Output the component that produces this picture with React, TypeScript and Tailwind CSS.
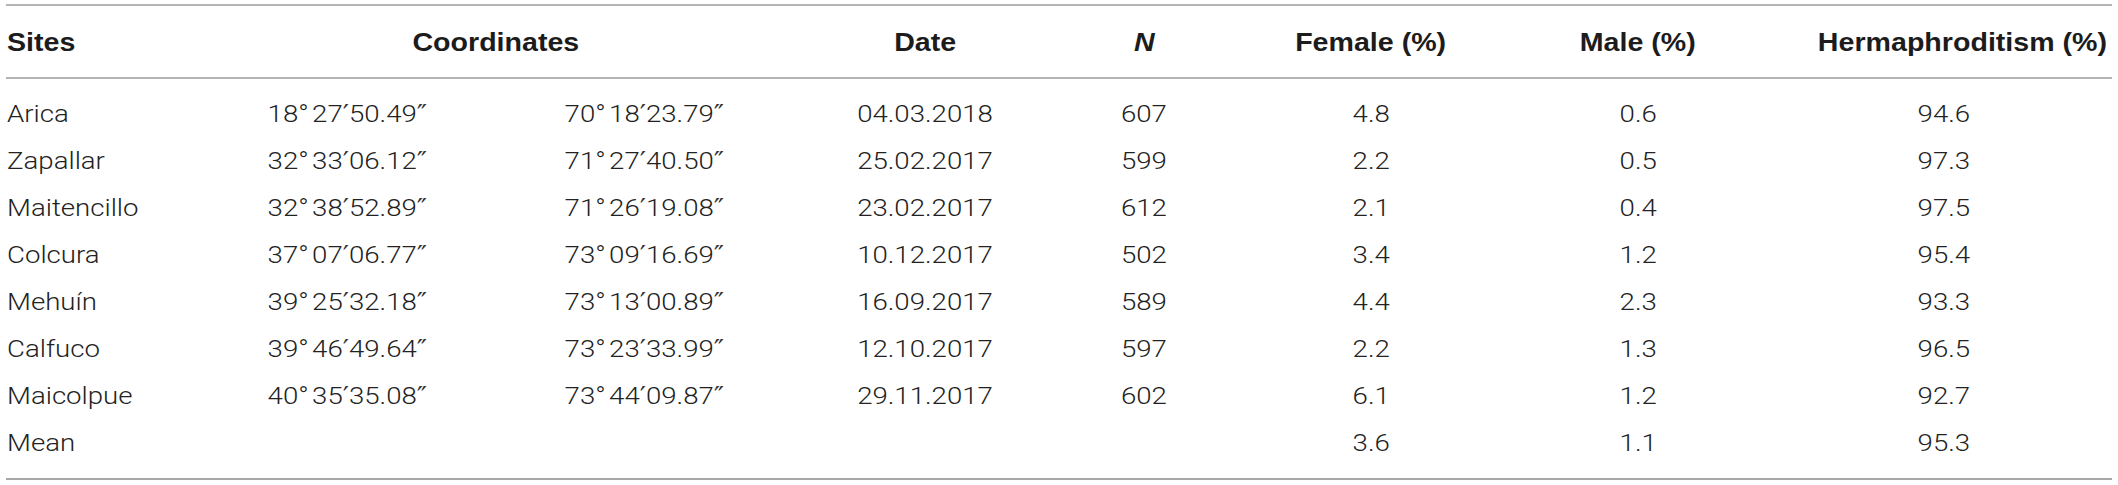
import React from "react";

const rows: [string, string, string, string, string, string, string, string][] = [
  ["Arica", "18°27′50.49″", "70°18′23.79″", "04.03.2018", "607", "4.8", "0.6", "94.6"],
  ["Zapallar", "32°33′06.12″", "71°27′40.50″", "25.02.2017", "599", "2.2", "0.5", "97.3"],
  ["Maitencillo", "32°38′52.89″", "71°26′19.08″", "23.02.2017", "612", "2.1", "0.4", "97.5"],
  ["Colcura", "37°07′06.77″", "73°09′16.69″", "10.12.2017", "502", "3.4", "1.2", "95.4"],
  ["Mehuín", "39°25′32.18″", "73°13′00.89″", "16.09.2017", "589", "4.4", "2.3", "93.3"],
  ["Calfuco", "39°46′49.64″", "73°23′33.99″", "12.10.2017", "597", "2.2", "1.3", "96.5"],
  ["Maicolpue", "40°35′35.08″", "73°44′09.87″", "29.11.2017", "602", "6.1", "1.2", "92.7"],
  ["Mean", "", "", "", "", "3.6", "1.1", "95.3"],
];

const cols =
  "grid grid-cols-[204px_274px_320px_242px_196px_258px_276px_336px]";

function Coord({ value }: { value: string }) {
  const parts = value.split(/([′″°])/).filter((p) => p !== "");
  return (
    <>
      {parts.map((p, i) =>
        p === "′" || p === "″" ? (
          <span key={i} className="font-['DejaVu_Sans'] font-normal text-[#333333]">
            {p}
          </span>
        ) : p === "°" ? (
          <span key={i} className="pr-[3px]">
            {p}
          </span>
        ) : (
          <span key={i}>{p}</span>
        )
      )}
    </>
  );
}

function T({ children, left }: { children: React.ReactNode; left?: boolean }) {
  return (
    <span
      className={`inline-block whitespace-nowrap scale-x-[1.15] ${left ? "origin-left" : "origin-center"}`}
    >
      {children}
    </span>
  );
}

function H({ children, left }: { children: React.ReactNode; left?: boolean }) {
  return (
    <span
      className={`inline-block whitespace-nowrap scale-x-[1.1] ${left ? "origin-left" : "origin-center"}`}
    >
      {children}
    </span>
  );
}

export default function App() {
  return (
    <div
      className="w-[2118px] h-[485px] bg-white px-[6px] pt-[4px] text-[24px] text-[#222222]"
      style={{ fontFamily: 'Roboto, "Liberation Sans", sans-serif' }}
    >
      <div className="h-[2px] bg-[#b4b4b4]" />
      <div
        className={`${cols} h-[71px] items-center font-bold text-[26px] text-[#1c1c1c] leading-none`}
        style={{ fontFamily: '"Liberation Sans", Arial, sans-serif' }}
      >
        <div className="text-left pl-[1px]">
          <H left>Sites</H>
        </div>
        <div className="col-span-2 text-center pr-[22px]">
          <H>Coordinates</H>
        </div>
        <div className="text-center">
          <H>Date</H>
        </div>
        <div className="text-center italic">
          <H>N</H>
        </div>
        <div className="text-center">
          <H>Female (%)</H>
        </div>
        <div className="text-center">
          <H>Male (%)</H>
        </div>
        <div className="text-center pl-[36px]">
          <H>Hermaphroditism (%)</H>
        </div>
      </div>
      <div className="h-[2px] bg-[#b4b4b4]" />
      <div className="pt-[12px] pb-[11px] font-light">
        {rows.map((r) => (
          <div key={r[0]} className={`${cols} h-[47px] items-center leading-[47px]`}>
            <div className="text-left pl-[1px]">
              <T left>{r[0]}</T>
            </div>
            <div className="text-center">
              <T>
                <Coord value={r[1]} />
              </T>
            </div>
            <div className="text-center">
              <T>
                <Coord value={r[2]} />
              </T>
            </div>
            {r.slice(3).map((c, i) => (
              <div key={i} className="text-center">
                <T>{c}</T>
              </div>
            ))}
          </div>
        ))}
      </div>
      <div className="h-[2px] bg-[#a8a8a8]" />
    </div>
  );
}
